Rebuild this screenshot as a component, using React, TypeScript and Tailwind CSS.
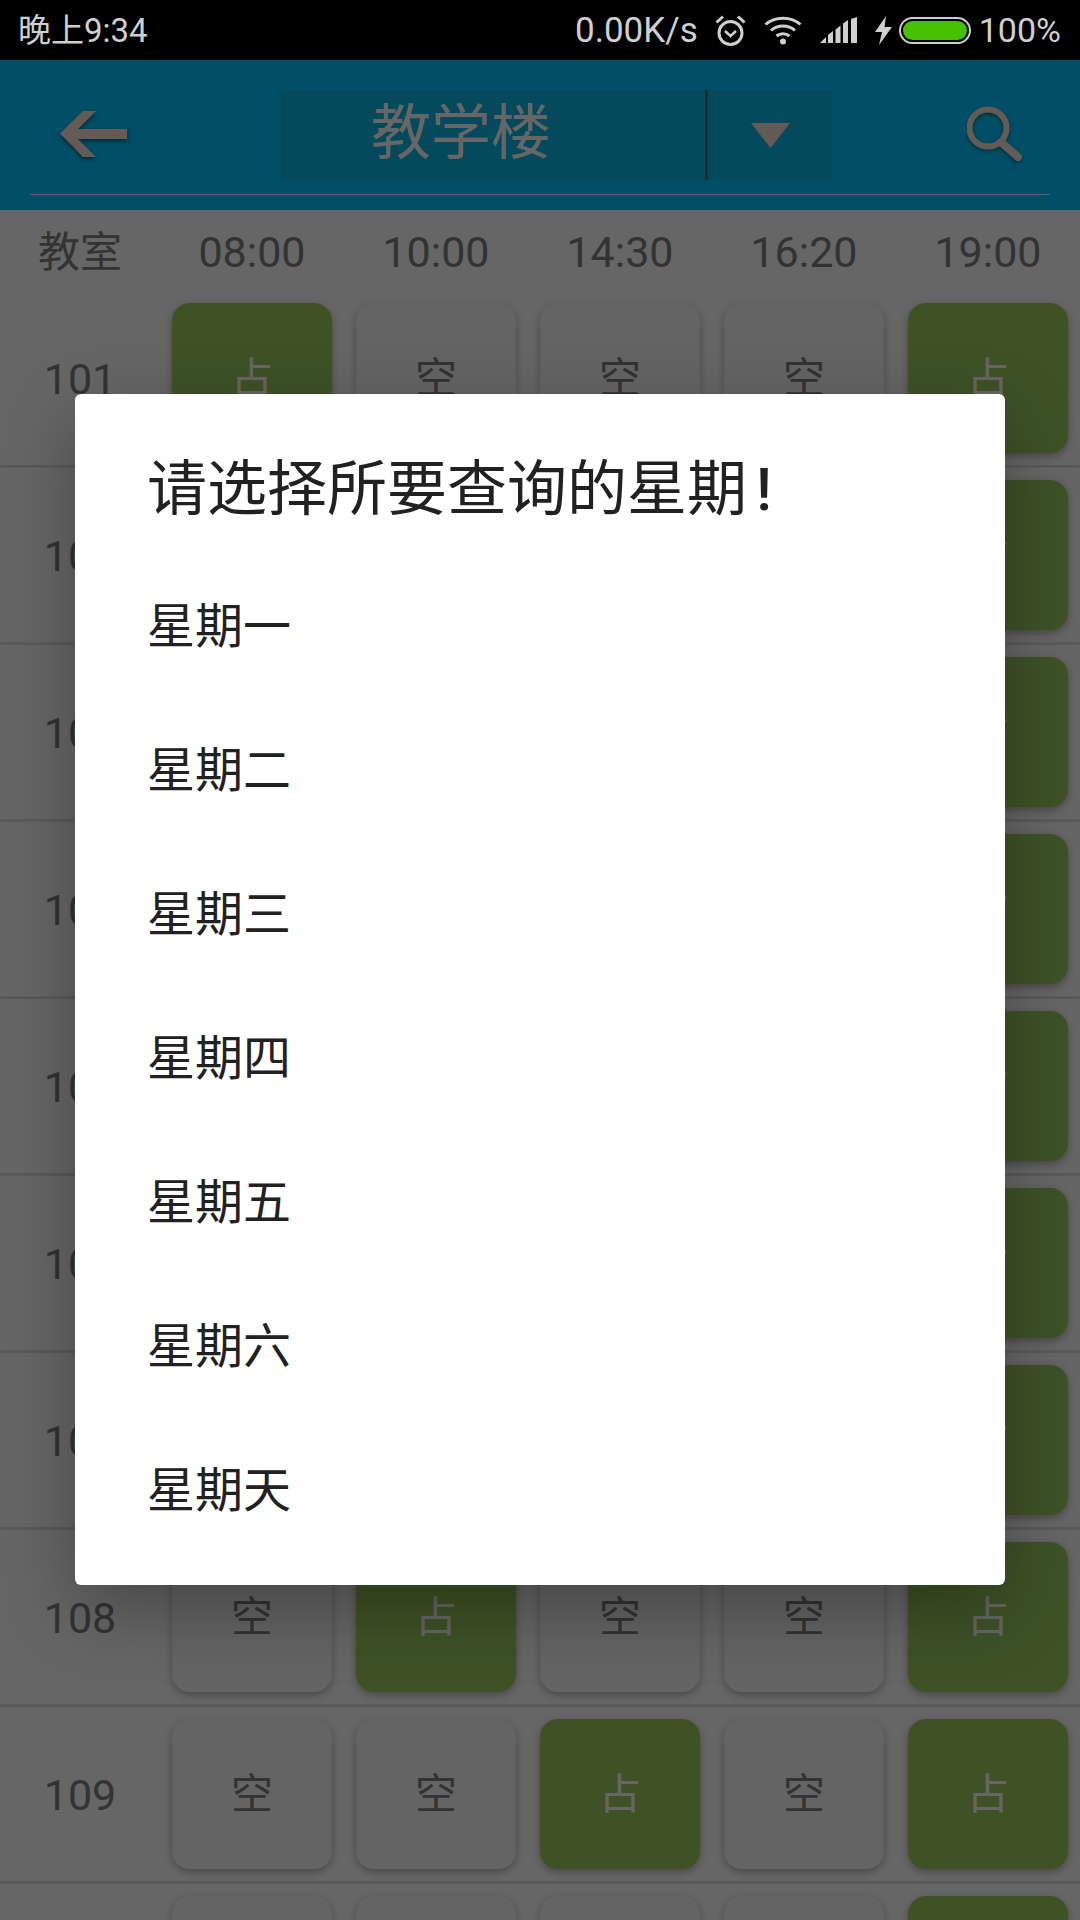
const times = ["08:00", "10:00", "14:30", "16:20", "19:00"];

// 1 = occupied; rows 102-107 are mostly hidden behind the dialog
const rows = [
  { room: "101", cells: [1, 0, 0, 0, 1] },
  { room: "102", cells: [0, 0, 0, 0, 1] },
  { room: "103", cells: [0, 0, 0, 0, 1] },
  { room: "104", cells: [0, 0, 0, 0, 1] },
  { room: "105", cells: [0, 0, 0, 0, 1] },
  { room: "106", cells: [0, 0, 0, 0, 1] },
  { room: "107", cells: [0, 0, 0, 0, 1] },
  { room: "108", cells: [0, 1, 0, 0, 1] },
  { room: "109", cells: [0, 0, 1, 0, 1] },
  { room: "110", cells: [0, 0, 0, 0, 1] },
];

const days = ["星期一", "星期二", "星期三", "星期四", "星期五", "星期六", "星期天"];

function StatusBar() {
  return (
    <div className="flex h-[60px] items-center justify-between bg-black pl-[18px] pr-[19px] text-[33px] leading-none text-[#cfcfcf]">
      <span>晚上9:34</span>
      <div className="flex items-center">
        <span className="text-[35px]">0.00K/s</span>
        {/* alarm */}
        <svg className="ml-[17px]" width="31" height="33" viewBox="0 0 31 33" fill="none" stroke="#cfcfcf">
          <circle cx="15.5" cy="19" r="11.5" strokeWidth="3" />
          <path d="M10 17l5.5 5 5.5-5" strokeWidth="2.6" />
          <path d="M1.5 8.5L8 2.5M29.5 8.5L23 2.5" strokeWidth="3" />
        </svg>
        {/* wifi */}
        <svg className="ml-[18px]" width="38" height="30" viewBox="0 0 38 30" fill="none" stroke="#cfcfcf" strokeWidth="3">
          <path d="M1.5 9.5C11 1 27 1 36.5 9.5" />
          <path d="M7 15.5C13.5 9.5 24.5 9.5 31 15.5" />
          <path d="M12.5 21C16 18 22 18 25.5 21" />
          <circle cx="19" cy="26.5" r="3" fill="#cfcfcf" stroke="none" />
        </svg>
        {/* signal */}
        <svg className="ml-[18px]" width="37" height="26" viewBox="0 0 37 26" fill="#cfcfcf">
          <path d="M0 26L6 20V26Z" />
          <path d="M8 18L13 14V26H8Z" />
          <path d="M15.5 12.500L20.500 8.500V26H15.500Z" />
          <path d="M23 6.500L28 3V26H23Z" />
          <path d="M31 2L37 0V26H31Z" />
        </svg>
        {/* charging */}
        <svg className="ml-[18px]" width="17" height="29" viewBox="0 0 17 29" fill="#cfcfcf">
          <path d="M11 0L0 16H7L4 29L17 11H9.500Z" />
        </svg>
        {/* battery */}
        <div className="ml-[7px] h-[27px] w-[72px] rounded-full border-2 border-[#cfcfcf] bg-black p-[2px]">
          <div className="h-full w-full rounded-full bg-[#47c000]" />
        </div>
        <span className="ml-[8px] text-[34px]">100%</span>
      </div>
    </div>
  );
}

function Header() {
  return (
    <div className="h-[150px] bg-[#00c5ff] px-[30px]">
      <div className="flex h-[135px] items-start border-b border-[#eeeeee] pt-[30px]">
        <svg className="ml-[30px] mt-[21px] drop-shadow-[0_2px_2px_rgba(0,0,0,0.5)]" width="67" height="46" viewBox="0 0 67 46" fill="#fae4d8">
          <path d="M0 22.500L23 0H36L18 18H67V28H18L36 46H23Z" />
        </svg>
        <div className="ml-[154px] flex h-[90px] w-[551px] bg-[#0cb6e6]">
          <div className="w-[424px] pl-[90px] text-[60px] leading-[87px] text-white">教学楼</div>
          <div className="h-full w-[3px] bg-[#666666]" />
          <div className="flex flex-1 justify-center pt-[33px]">
            <svg width="39" height="25" viewBox="0 0 39 25" fill="#fae4d8">
              <path d="M0 0H39L19.500 25Z" />
            </svg>
          </div>
        </div>
        <svg className="ml-[135px] mt-[16px] drop-shadow-[0_2px_2px_rgba(0,0,0,0.4)]" width="56" height="56" viewBox="0 0 56 56" fill="none" stroke="#fae4d8">
          <circle cx="21" cy="22" r="18.500" strokeWidth="6" />
          <path d="M35 37L51 51" strokeWidth="8" strokeLinecap="round" />
        </svg>
      </div>
    </div>
  );
}

function Table() {
  return (
    <div className="bg-white text-[42px] text-[#808080]">
      <div className="grid h-[81px] grid-cols-[160px_repeat(5,184px)] items-center pt-[3px] text-center">
        <span>教室</span>
        {times.map((t) => (
          <span key={t} className="text-[43px]">
            {t}
          </span>
        ))}
      </div>
      {rows.map((row) => (
        <div key={row.room} className="grid h-[177px] grid-cols-[160px_repeat(5,184px)] items-center border-b-[3px] border-[#e0e0e0] text-center">
          <span className="pt-[2px] text-[43px]">{row.room}</span>
          {row.cells.map((busy, i) => (
            <div key={i} className="px-3">
              <div
                className={
                  busy
                    ? "flex h-[150px] items-center justify-center rounded-[18px] bg-[#9ccd60] text-white shadow-[0_3px_8px_rgba(0,0,0,0.3)]"
                    : "flex h-[150px] items-center justify-center rounded-[18px] bg-[#fbfbfb] shadow-[0_3px_8px_rgba(0,0,0,0.3)]"
                }
              >
                {busy ? "占" : "空"}
              </div>
            </div>
          ))}
        </div>
      ))}
    </div>
  );
}

function DayDialog() {
  return (
    <div className="absolute inset-0 flex items-center justify-center bg-black/60 pb-px">
      <div className="h-[1191px] w-[930px] rounded-[6px] bg-white pl-[72px] text-[#212121] shadow-[0_24px_72px_rgba(0,0,0,0.3)]">
        <div className="h-[161px] pt-[54px] text-[60px] leading-[84px]">
          请选择所要查询的星期<span className="ml-[9px] font-medium">!</span>
        </div>
        {days.map((d) => (
          <div key={d} className="flex h-[144px] items-center text-[48px]">
            {d}
          </div>
        ))}
      </div>
    </div>
  );
}

export default function App() {
  return (
    <div className="h-[1920px] w-[1080px] overflow-hidden font-[Roboto,'Noto_Sans_CJK_SC',sans-serif]">
      <StatusBar />
      <div className="relative h-[1860px] overflow-hidden">
        <Header />
        <Table />
        <DayDialog />
      </div>
    </div>
  );
}
